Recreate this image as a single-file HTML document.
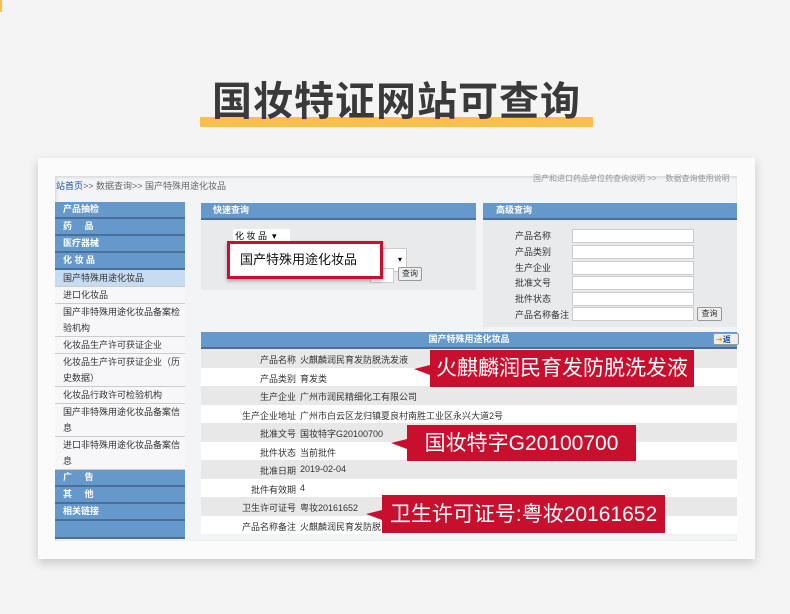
<!DOCTYPE html>
<html><head><meta charset="utf-8"><style>
*{margin:0;padding:0;box-sizing:border-box}
body{width:790px;height:614px;background:#f4f4f4;position:relative;overflow:hidden;font-family:"Liberation Sans","Noto Sans CJK SC",sans-serif;}
.a{position:absolute}
.t{font-size:9px;color:#333;white-space:nowrap;line-height:1}
.bar{background:#6599cc;color:#fff;font-weight:bold;font-size:9px;padding-left:8px;border-bottom:2px solid #4a6f99;line-height:15px}
.it{background:#f7f7f9;border-bottom:1px solid #ccc;font-size:9px;color:#333;padding-left:8px;line-height:16px}
.row{left:201px;width:536px;height:18.5px}
.lab{position:absolute;right:441px;top:4px;font-size:9px;color:#333;white-space:nowrap}
.val{position:absolute;left:99px;top:4px;font-size:9px;color:#333;white-space:nowrap}
.inp{position:absolute;left:572px;width:122px;height:14px;background:#fff;border:1px solid #ccc}
.btn{position:absolute;font-size:8px;border:1px solid #999;background:#eee;border-radius:2px;text-align:center;line-height:12px;color:#333}
.call{position:absolute;background:#c8102e;color:#fff;font-size:21px;line-height:1;white-space:nowrap;display:flex;align-items:center;justify-content:center}
.call:before{content:"";position:absolute;left:-16px;top:50%;margin-top:-4px;border-right:16px solid #c8102e;border-top:4px solid transparent;border-bottom:6px solid transparent}
</style></head><body>
<div class="a" style="left:0;top:0;width:2px;height:12px;background:#fbbf4a"></div>
<div class="a" style="left:200px;top:117px;width:393px;height:10px;background:#fbbf4a"></div>
<div class="a" style="left:212px;top:78px;font-size:40px;font-weight:bold;color:#3a3a3a;letter-spacing:1px;line-height:48px;white-space:nowrap">国妆特证网站可查询</div>

<div class="a" style="left:38px;top:158px;width:717px;height:401px;background:#fbfbfb;box-shadow:0 4px 10px rgba(0,0,0,.18)"></div>
<div class="a" style="left:55px;top:176px;width:682px;height:365px;background:#f3f4f6;box-shadow:inset 1px 1px 3px rgba(0,0,0,.15)"></div>

<div class="a t" style="left:56px;top:182px;color:#666"><span style="color:#1a4fa0">站首页</span>&gt;&gt; 数据查询&gt;&gt; 国产特殊用途化妆品</div>
<div class="a t" style="left:533px;top:175px;color:#999;font-size:8px">国产和进口药品单位药查询说明 &gt;&gt; &nbsp;&nbsp; 数据查询使用说明</div>

<div class="a" style="left:55px;top:202px;width:130px">
<div class="bar">产品抽检</div><div class="bar">药&nbsp;&nbsp;&nbsp;&nbsp;&nbsp;品</div><div class="bar">医疗器械</div><div class="bar">化 妆 品</div>
<div class="it" style="background:#c6dcf3">国产特殊用途化妆品</div>
<div class="it">进口化妆品</div>
<div class="it">国产非特殊用途化妆品备案检<br>验机构</div>
<div class="it">化妆品生产许可获证企业</div>
<div class="it">化妆品生产许可获证企业（历<br>史数据）</div>
<div class="it">化妆品行政许可检验机构</div>
<div class="it">国产非特殊用途化妆品备案信<br>息</div>
<div class="it">进口非特殊用途化妆品备案信<br>息</div>
<div class="bar">广&nbsp;&nbsp;&nbsp;&nbsp;&nbsp;告</div><div class="bar">其&nbsp;&nbsp;&nbsp;&nbsp;&nbsp;他</div><div class="bar">相关链接</div><div class="bar" style="height:18px"></div>
</div>

<div class="a" style="left:201px;top:203px;width:275px;height:87px;background:#e9eaec"></div>
<div class="a bar" style="left:201px;top:203px;width:275px;padding-left:12px">快速查询</div>
<div class="a" style="left:233px;top:229px;width:57px;height:14px;background:#fff;font-size:9px;padding-left:2px;line-height:14px">化 妆 品 &nbsp;▾</div>
<div class="a" style="left:380px;top:248px;width:27px;height:24px;background:#fff;border:1px solid #ccc;font-size:8px;line-height:22px;text-align:right;padding-right:4px">▾</div>
<div class="a" style="left:370px;top:268px;width:24px;height:15px;background:#fff;border:1px solid #ccc"></div>
<div class="btn" style="left:398px;top:267px;width:24px;height:14px">查询</div>
<div class="a" style="left:227px;top:241px;width:156px;height:38px;border:3px solid #c8102e;background:#fff;box-shadow:0 2px 4px rgba(0,0,0,.3);font-size:13px;line-height:32px;padding-left:10px;color:#111;white-space:nowrap">国产特殊用途化妆品</div>

<div class="a" style="left:483px;top:203px;width:254px;height:124px;background:#e9eaec"></div>
<div class="a bar" style="left:483px;top:203px;width:254px;padding-left:13px">高级查询</div>
<div class="a t" style="left:515px;top:232px">产品名称</div><div class="inp" style="top:229px"></div>
<div class="a t" style="left:515px;top:248px">产品类别</div><div class="inp" style="top:245px"></div>
<div class="a t" style="left:515px;top:264px">生产企业</div><div class="inp" style="top:261px"></div>
<div class="a t" style="left:515px;top:279px">批准文号</div><div class="inp" style="top:276px"></div>
<div class="a t" style="left:515px;top:295px">批件状态</div><div class="inp" style="top:292px"></div>
<div class="a t" style="left:515px;top:311px">产品名称备注</div><div class="inp" style="top:307px"></div>
<div class="btn" style="left:697px;top:307px;width:25px;height:14px">查询</div>

<div class="a bar" style="left:201px;top:332px;width:536px;height:17px;text-align:center;padding:0;line-height:15px">国产特殊用途化妆品</div>
<div class="btn" style="left:713px;top:333px;width:26px;height:12px;text-align:left;padding-left:2px"><span style="color:#f39a1e">➜</span><b style="color:#1a4fa0">返</b></div>

<div class="a" style="left:201px;top:349px;width:536px">
<div style="position:relative;height:18.5px;background:#e8e8e8"><span class="lab">产品名称</span><span class="val">火麒麟润民育发防脱洗发液</span></div>
<div style="position:relative;height:18.5px;background:#fff"><span class="lab">产品类别</span><span class="val">育发类</span></div>
<div style="position:relative;height:18.5px;background:#e8e8e8"><span class="lab">生产企业</span><span class="val">广州市润民精细化工有限公司</span></div>
<div style="position:relative;height:18.5px;background:#fff"><span class="lab">生产企业地址</span><span class="val">广州市白云区龙归镇夏良村南胜工业区永兴大道2号</span></div>
<div style="position:relative;height:18.5px;background:#e8e8e8"><span class="lab">批准文号</span><span class="val">国妆特字G20100700</span></div>
<div style="position:relative;height:18.5px;background:#fff"><span class="lab">批件状态</span><span class="val">当前批件</span></div>
<div style="position:relative;height:18.5px;background:#e8e8e8"><span class="lab">批准日期</span><span class="val">2019-02-04</span></div>
<div style="position:relative;height:18.5px;background:#fff"><span class="lab">批件有效期</span><span class="val">4</span></div>
<div style="position:relative;height:18.5px;background:#e8e8e8"><span class="lab">卫生许可证号</span><span class="val">粤妆20161652</span></div>
<div style="position:relative;height:18.5px;background:#fff"><span class="lab">产品名称备注</span><span class="val">火麒麟润民育发防脱</span></div>
</div>

<div class="call" style="left:430px;top:350px;width:264px;height:37px">火麒麟润民育发防脱洗发液</div>
<div class="call" style="left:407px;top:425px;width:229px;height:36px">国妆特字G20100700</div>
<div class="call" style="left:382px;top:495px;width:283px;height:38px">卫生许可证号:粤妆20161652</div>
</body></html>
